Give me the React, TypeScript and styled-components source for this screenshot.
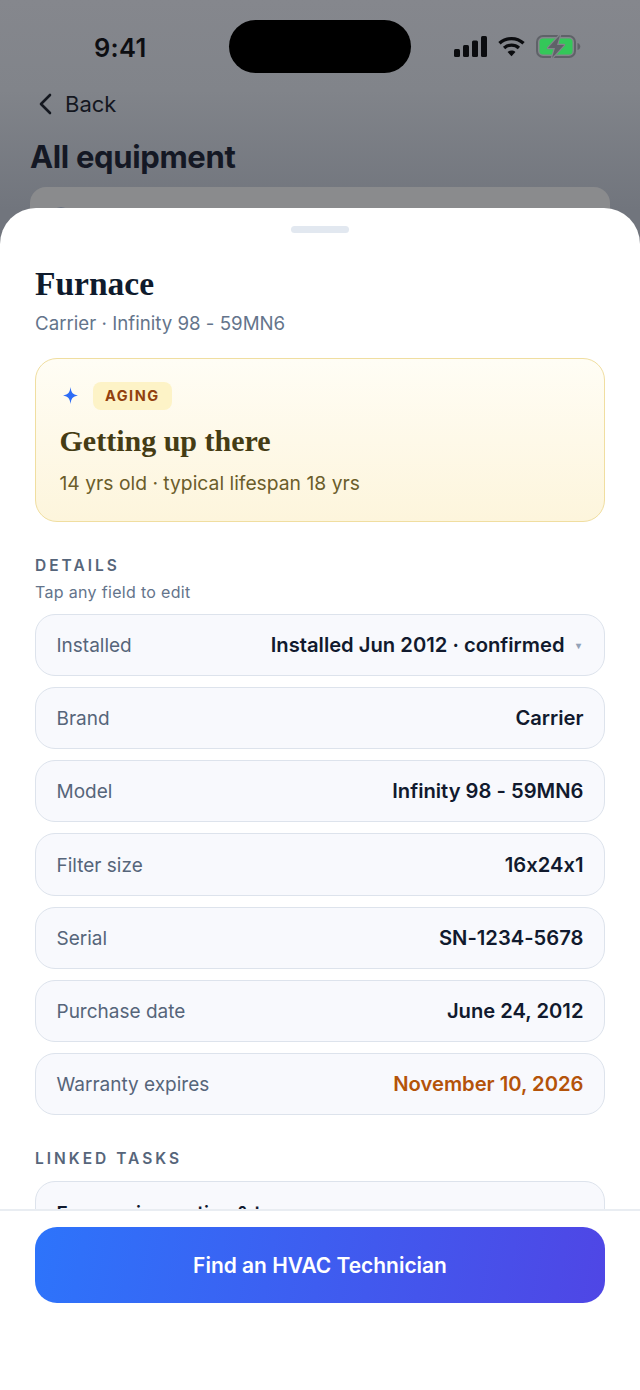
import React from 'react'
import styled, { createGlobalStyle } from 'styled-components'
import { Search } from 'lucide-react'

const GlobalStyle = createGlobalStyle`
  html, body {
    margin: 0;
    padding: 0;
    background: #fff;
  }
  body {
    font-family: Inter, "Liberation Sans", sans-serif;
    font-feature-settings: "calt" 0;
    -webkit-font-smoothing: antialiased;
  }
  * { box-sizing: border-box; }
`

const Screen = styled.div`
  position: relative;
  width: 640px;
  height: 1390px;
  overflow: hidden;
  background: linear-gradient(180deg, #85878d 0%, #81848a 90px, #71757d 210px);
`

const StatusBar = styled.div`
  display: flex;
  align-items: flex-start;
  height: 73px;
  padding-top: 20px;
`

const Clock = styled.div`
  width: 229px;
  padding-left: 94px;
  font-size: 25.5px;
  line-height: 55px;
  font-weight: 600;
  letter-spacing: 0.3px;
  color: #0d0e12;
`

const Island = styled.div`
  width: 182px;
  height: 53px;
  border-radius: 27px;
  background: #000;
`

const StatusIcons = styled.div`
  display: flex;
  align-items: center;
  gap: 11px;
  height: 53px;
  padding-left: 43px;
`

const BackRow = styled.div`
  display: flex;
  align-items: center;
  gap: 13px;
  margin-top: 17px;
  padding-left: 38px;
  height: 28px;
  font-size: 22px;
  color: #14171f;
`

const PageTitle = styled.h1`
  margin: 21px 0 0 30px;
  font-size: 31px;
  line-height: 36px;
  font-weight: 700;
  letter-spacing: -0.35px;
  color: #141824;
`

const SearchBar = styled.div`
  display: flex;
  align-items: center;
  margin: 12px 30px 0;
  height: 60px;
  padding-left: 20px;
  border-radius: 16px;
  background: #8a8b8d;
  color: #6b7280;
`

const Sheet = styled.div`
  position: absolute;
  left: 0;
  right: 0;
  top: 208px;
  bottom: 0;
  display: flex;
  flex-direction: column;
  border-radius: 36px 36px 0 0;
  background: #fff;
`

const Handle = styled.div`
  flex: none;
  width: 58px;
  height: 7px;
  margin: 18px auto 0;
  border-radius: 4px;
  background: #e2e8f0;
`

const Scroll = styled.div`
  flex: 1;
  min-height: 0;
  overflow: hidden;
  padding: 0 35px;
`

const SheetTitle = styled.h2`
  margin: 29px 0 0;
  font-family: "Liberation Serif", serif;
  font-size: 33.5px;
  line-height: 44px;
  font-weight: 700;
  color: #0f1b2d;
`

const Subtitle = styled.div`
  margin-top: 5px;
  font-size: 18.7px;
  line-height: 26px;
  color: #64748b;
`

const StatusCard = styled.div`
  height: 164px;
  margin-top: 21px;
  padding: 22.5px 23.5px 0;
  border: 1.5px solid #f0dea0;
  border-radius: 22px;
  background: linear-gradient(180deg, #fffdf5 0%, #fdf5dc 100%);
`

const StatusHeader = styled.div`
  display: flex;
  align-items: center;
  gap: 15px;
  padding-left: 3px;
`

const Badge = styled.span`
  display: inline-flex;
  align-items: center;
  height: 28px;
  padding: 0 12.5px;
  border-radius: 8px;
  background: #fdf3c7;
  font-size: 14.5px;
  font-weight: 700;
  letter-spacing: 1.5px;
  color: #92400e;
`

const StatusHeading = styled.div`
  margin-top: 12px;
  font-family: "Liberation Serif", serif;
  font-size: 30px;
  line-height: 38px;
  font-weight: 700;
  color: #453c14;
`

const StatusText = styled.div`
  margin-top: 10px;
  font-size: 19.3px;
  line-height: 26px;
  color: #6b5d2a;
`

const SectionLabel = styled.div<{ $top: number }>`
  margin-top: ${(p) => p.$top}px;
  font-size: 15.5px;
  line-height: 20px;
  font-weight: 600;
  letter-spacing: 3px;
  color: #56657a;
`

const Hint = styled.div`
  margin-top: 6px;
  margin-bottom: 12px;
  font-size: 16px;
  line-height: 20px;
  letter-spacing: 0.32px;
  color: #64748b;
`

const Fields = styled.div`
  display: flex;
  flex-direction: column;
  gap: 11px;
`

const FieldRow = styled.div`
  display: flex;
  align-items: center;
  justify-content: space-between;
  height: 62.17px;
  padding: 0 20.5px;
  border: 1.5px solid #dde3ec;
  border-radius: 20px;
  background: #f8f9fd;
`

const FieldLabel = styled.span`
  padding-top: 2px;
  font-size: 19px;
  line-height: 24px;
  color: #56657a;
`

const FieldValue = styled.span<{ $warn?: boolean }>`
  display: inline-flex;
  align-items: center;
  gap: 11px;
  font-size: 20.2px;
  line-height: 24px;
  font-weight: 600;
  color: ${(p) => (p.$warn ? '#b45309' : '#111a2e')};
`

const Caret = styled.span`
  padding-right: 3px;
  font-size: 10px;
  color: #94a3b8;
`

const TaskCard = styled.div`
  height: 70px;
  margin-top: 12px;
  padding: 19.5px 20.5px;
  border: 1.5px solid #dde3ec;
  border-radius: 20px;
  background: #f8f9fd;
  font-size: 19px;
  line-height: 24px;
  font-weight: 600;
  color: #111a2e;
`

const Footer = styled.div`
  flex: none;
  height: 181px;
  padding: 16px 35px 0;
  border-top: 2px solid #e9edf2;
  background: #fff;
`

const CtaButton = styled.button`
  display: block;
  width: 100%;
  height: 76px;
  border: 0;
  border-radius: 22px;
  background: linear-gradient(100deg, #2d74fb 0%, #4f46e5 100%);
  font-family: inherit;
  font-size: 20.95px;
  font-weight: 600;
  color: #fff;
`

const fields = [
  { label: 'Brand', value: 'Carrier' },
  { label: 'Model', value: 'Infinity 98 - 59MN6' },
  { label: 'Filter size', value: '16x24x1' },
  { label: 'Serial', value: 'SN-1234-5678' },
  { label: 'Purchase date', value: 'June 24, 2012' },
]

const SignalIcon = () => (
  <svg width="33" height="21" viewBox="0 0 33 21" fill="#0b0c0f">
    <rect x="0" y="13" width="6" height="8" rx="1.5" />
    <rect x="9" y="9" width="6" height="12" rx="1.5" />
    <rect x="18" y="4.5" width="6" height="16.500" rx="1.5" />
    <rect x="27" y="0" width="6" height="21" rx="1.5" />
  </svg>
)

const WifiIcon = () => (
  <svg width="27" height="21" viewBox="0 0 28 21" fill="none" stroke="#0b0c0f" strokeWidth="3.4">
    <path d="M1.5 7.200C8.600 .6 19.400 .6 26.500 7.200" />
    <path d="M6.300 12C10.700 8 17.300 8 21.700 12" />
    <path d="M14 20.500 9.900 16.200C12.200 14.200 15.800 14.200 18.100 16.200Z" fill="#0b0c0f" stroke="none" />
  </svg>
)

const BatteryIcon = () => (
  <svg width="45" height="23" viewBox="0 0 45 23">
    <rect x="1" y="1" width="38" height="21" rx="6" fill="none" stroke="#5f6268" strokeWidth="2" />
    <rect x="3.500" y="3.500" width="33" height="16" rx="3.500" fill="#34c759" />
    <path d="M41.500 8v7c1.800 -.5 2.800 -2 2.800 -3.500S43.300 8.500 41.500 8Z" fill="#5f6268" />
    <path
      d="M24 0 12 13h7L16 23 28 10h-7Z"
      fill="#5f6268"
      stroke="#83858c"
      strokeWidth="2.400"
      strokeLinejoin="round"
      paintOrder="stroke"
    />
  </svg>
)

const BackChevron = () => (
  <svg width="14" height="22" viewBox="0 0 14 22" fill="none" stroke="#14171f" strokeWidth="2.600" strokeLinecap="round" strokeLinejoin="round">
    <path d="M12 2 3 11l9 9" />
  </svg>
)

const Sparkle = () => (
  <svg width="15" height="17" viewBox="0 0 14 16" fill="#2d6cf6">
    <path d="M7 0C7.600 5 9 7.200 14 8 9 8.800 7.600 11 7 16 6.400 11 5 8.800 0 8 5 7.200 6.400 5 7 0Z" />
  </svg>
)

const App: React.FC = () => {
  return (
    <Screen>
      <GlobalStyle />
      <StatusBar>
        <Clock>9:41</Clock>
        <Island />
        <StatusIcons>
          <SignalIcon />
          <WifiIcon />
          <BatteryIcon />
        </StatusIcons>
      </StatusBar>
      <BackRow>
        <BackChevron />
        <span>Back</span>
      </BackRow>
      <PageTitle>All equipment</PageTitle>
      <SearchBar>
        <Search size={24} strokeWidth={2.2} />
      </SearchBar>

      <Sheet>
        <Handle />
        <Scroll>
          <SheetTitle>Furnace</SheetTitle>
          <Subtitle>Carrier · Infinity 98 - 59MN6</Subtitle>

          <StatusCard>
            <StatusHeader>
              <Sparkle />
              <Badge>AGING</Badge>
            </StatusHeader>
            <StatusHeading>Getting up there</StatusHeading>
            <StatusText>14 yrs old · typical lifespan 18 yrs</StatusText>
          </StatusCard>

          <SectionLabel $top={34}>DETAILS</SectionLabel>
          <Hint>Tap any field to edit</Hint>
          <Fields>
            <FieldRow>
              <FieldLabel>Installed</FieldLabel>
              <FieldValue>
                Installed Jun 2012 · confirmed <Caret>▾</Caret>
              </FieldValue>
            </FieldRow>
            {fields.map((f) => (
              <FieldRow key={f.label}>
                <FieldLabel>{f.label}</FieldLabel>
                <FieldValue>{f.value}</FieldValue>
              </FieldRow>
            ))}
            <FieldRow>
              <FieldLabel>Warranty expires</FieldLabel>
              <FieldValue $warn>November 10, 2026</FieldValue>
            </FieldRow>
          </Fields>

          <SectionLabel $top={34}>LINKED TASKS</SectionLabel>
          <TaskCard>Furnace inspection &amp; tune-up</TaskCard>
        </Scroll>
        <Footer>
          <CtaButton>Find an HVAC Technician</CtaButton>
        </Footer>
      </Sheet>
    </Screen>
  )
}

export default App
